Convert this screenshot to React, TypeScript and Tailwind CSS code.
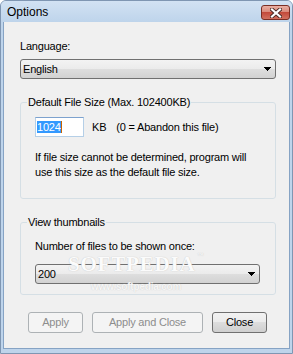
import { clsx } from "clsx"

// Win7 basic-theme "Options" dialog

function DropArrow() {
  return (
    <svg width="7" height="4" viewBox="0 0 7 4" shapeRendering="crispEdges">
      <rect x="0" y="0" width="7" height="1" fill="#000" />
      <rect x="1" y="1" width="5" height="1" fill="#000" />
      <rect x="2" y="2" width="3" height="1" fill="#000" />
      <rect x="3" y="3" width="1" height="1" fill="#000" />
    </svg>
  )
}

function Combo({ value, className }: { value: string; className?: string }) {
  return (
    <div
      className={clsx(
        "flex h-[20px] shrink-0 items-center justify-between rounded-[3px] border border-[#707070] pl-[2px] pr-[4px]",
        "bg-[linear-gradient(#f3f3f3,#ebebeb_50%,#dedede_50%,#d2d2d2)]",
        className
      )}
    >
      <span>{value}</span>
      <DropArrow />
    </div>
  )
}

function Button({ label, disabled, className }: { label: string; disabled?: boolean; className?: string }) {
  return (
    <div
      className={clsx(
        "flex h-[21px] items-center justify-center rounded-[3px] border",
        disabled
          ? "border-[#adb2b5] bg-[#f4f4f4] text-[#8d8d8d]"
          : "border-[#707070] bg-[linear-gradient(#f2f2f2,#ebebeb_50%,#dddddd_50%,#cfcfcf)] text-black",
        className
      )}
    >
      {label}
    </div>
  )
}

function CloseX() {
  return (
    <div className="mr-[2px] mt-[4px] flex h-[15px] w-[29px] items-center justify-center rounded-[3px] border border-[#7a2e24] bg-[linear-gradient(#eab0a4,#d88576_50%,#c34a3b_50%,#d2705f)]">
      <svg width="12" height="10" viewBox="0 0 12 10">
        <path d="M2 1.5 10 8.5M10 1.5 2 8.5" stroke="#4a2a26" strokeWidth="4" strokeLinecap="square" />
        <path d="M2 1.5 10 8.5M10 1.5 2 8.5" stroke="#fff" strokeWidth="2.2" strokeLinecap="square" />
      </svg>
    </div>
  )
}

function GroupBox({ title, className, children }: { title: string; className?: string; children: React.ReactNode }) {
  return (
    <fieldset className={clsx("rounded-[3px] border border-[#d5dfe5] p-0", className)}>
      <legend className="ml-[6px] px-[1px] leading-[13px]">{title}</legend>
      {children}
    </fieldset>
  )
}

export default function App() {
  return (
    <div className="relative flex h-[354px] w-[293px] flex-col overflow-hidden rounded-t-[6px] border border-[#7f96b2] bg-[#bed4eb] font-['Liberation_Sans',Arial,sans-serif] text-[11px] leading-[13px] tracking-[-0.2px] text-black">
      <div className="flex h-[21px] shrink-0 items-start justify-between bg-[linear-gradient(#d2e2f3,#bed4eb)]">
        <span className="pl-[6px] pt-[4px] text-[12px] leading-[15px] tracking-normal">Options</span>
        <CloseX />
      </div>

      <div className="mx-[2px] mb-[4px] flex flex-1 flex-col border border-t-0 border-[#86a3c4] bg-[#f0f0f0] pl-[16px] pr-[13px]">
        <div className="mt-[18px]">Language:</div>
        <Combo value="English" className="mt-[6px]" />

        <GroupBox title="Default File Size (Max. 102400KB)" className="mt-[17px]">
          <div className="flex flex-col pb-[18px] pl-[14px] pr-[10px] pt-[8px]">
            <div className="flex items-center">
              <div className="flex h-[20px] w-[49px] items-center border border-[#b5cfe7] border-t-[#7da2ce] bg-white pl-[1px]">
                <span className="inline-block h-[12px] bg-[#3399ff] leading-[12px] text-white">1024</span>
                <span className="inline-block h-[12px] w-[1px] bg-[#c86400]" />
              </div>
              <span className="ml-[8px]">KB</span>
              <span className="ml-[10px]">(0 = Abandon this file)</span>
            </div>
            <p className="mt-[13px] leading-[15px]">
              If file size cannot be determined, program will
              <br />
              use this size as the default file size.
            </p>
          </div>
        </GroupBox>

        <GroupBox title="View thumbnails" className="mt-[17px]">
          <div className="flex flex-col pb-[10px] pl-[14px] pr-[15px] pt-[11px]">
            <div>Number of files to be shown once:</div>
            <Combo value="200" className="mt-[11px]" />
          </div>
        </GroupBox>

        <div className="ml-[8px] mt-[17px] flex gap-[9px]">
          <Button label="Apply" disabled className="w-[55px]" />
          <Button label="Apply and Close" disabled className="w-[111px]" />
          <Button label="Close" className="w-[55px]" />
        </div>
      </div>

      {/* softpedia watermark */}
      <div className="pointer-events-none absolute left-[67px] top-[256px] font-['Liberation_Serif',serif] text-[21px] font-bold leading-[15px] tracking-[0.8px] text-[#fbfbfb] [text-shadow:0_0_1px_#b8b8b8]">
        SOFTPEDIA
        <span className="absolute -right-[9px] -top-[5px] text-[6px] leading-[6px]">™</span>
      </div>
      <div className="pointer-events-none absolute left-[90px] top-[281px] text-[10px] font-bold leading-[10px] text-[#f6f6f6] [text-shadow:0_0_1px_#c4c4c4]">
        www.softpedia.com
      </div>
    </div>
  )
}
